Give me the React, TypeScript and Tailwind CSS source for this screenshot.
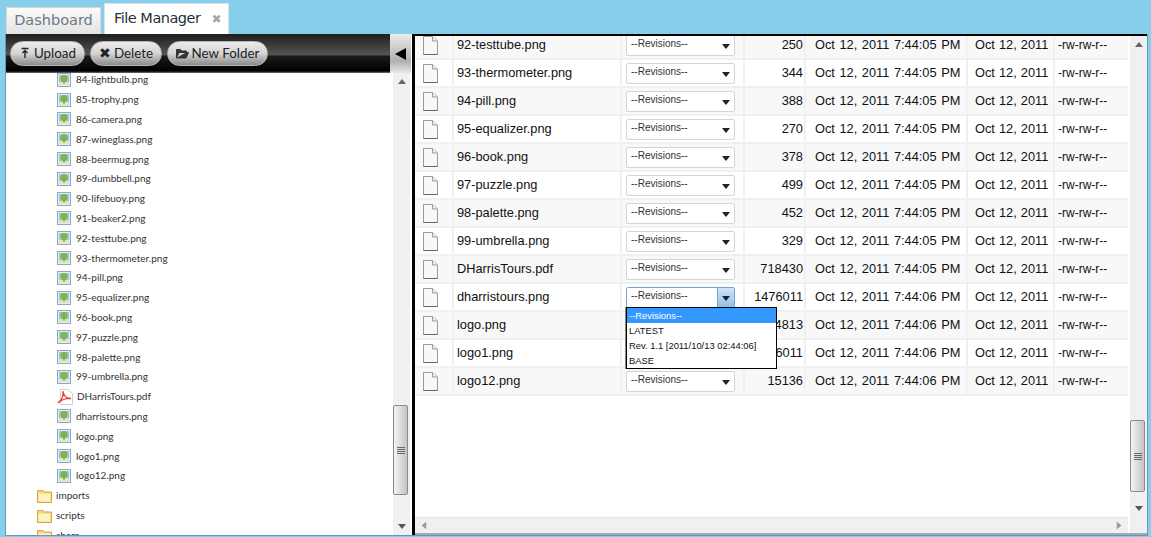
import React from "react";

const tree = ["84-lightbulb.png","85-trophy.png","86-camera.png","87-wineglass.png","88-beermug.png","89-dumbbell.png","90-lifebuoy.png","91-beaker2.png","92-testtube.png","93-thermometer.png","94-pill.png","95-equalizer.png","96-book.png","97-puzzle.png","98-palette.png","99-umbrella.png","DHarrisTours.pdf","dharristours.png","logo.png","logo1.png","logo12.png"];
const rows: [string,string,string][] = [
["92-testtube.png","250","7:44:05"],["93-thermometer.png","344","7:44:05"],["94-pill.png","388","7:44:05"],["95-equalizer.png","270","7:44:05"],["96-book.png","378","7:44:05"],["97-puzzle.png","499","7:44:05"],["98-palette.png","452","7:44:05"],["99-umbrella.png","329","7:44:05"],["DHarrisTours.pdf","718430","7:44:05"],["dharristours.png","1476011","7:44:06"],["logo.png","4813","7:44:06"],["logo1.png","6011","7:44:06"],["logo12.png","15136","7:44:06"]];

function ImgIcon(){return <svg width="14" height="14" viewBox="0 0 14 14" className="shrink-0"><rect x=".5" y=".5" width="13" height="13" fill="#e4ebf5" stroke="#8da6cc"/><rect x="2" y="2" width="10" height="10" fill="#9cc8d6"/><rect x="2" y="9" width="10" height="3" fill="#d6ecb8"/><circle cx="7" cy="5.500" r="3.500" fill="#7db548"/><rect x="6.200" y="8" width="1.600" height="2.500" fill="#b08a50"/></svg>}
function PdfIcon(){return <svg width="16" height="16" viewBox="0 0 16 16" className="shrink-0"><path d="M3.500.5H11L15.500 4.500V15.500H3.500Z" fill="#fff" stroke="#cfcfcf"/><path d="M.8 14C4.500 11.500 6.500 7 6 2.200C6.500 6.500 9.500 10 14 9.500C9 9 4.500 11 .8 14Z" fill="none" stroke="#d9443f" strokeWidth="1.300"/></svg>}
function FolderIcon(){return <svg width="15" height="14" viewBox="0 0 15 14" className="shrink-0"><path d="M.5 1.500H6L7 3H14.500V13.500H.5Z" fill="#f7d774" stroke="#d9a441"/><rect x="1.500" y="4.500" width="12" height="8" fill="#fdf3c4"/></svg>}
function DocIcon(){return <svg width="15" height="19" viewBox="0 0 15 19"><path d="M.5.5H9.500L14.500 5V18.500H.5Z" fill="#f8f8f8" stroke="#9a9a9a"/><path d="M9.500 .5V5H14.500" fill="#ececec" stroke="#9a9a9a"/><path d="M.5 18.500H14.500" stroke="#666"/></svg>}

function Caret({cls="#222"}:{cls?:string}){return <svg width="8" height="5" viewBox="0 0 8 5"><path d="M0 0H8L4 5Z" fill={cls}/></svg>}
function Grip(){return <div className="flex flex-col gap-[1px]"><div className="w-[8px] h-[1px] bg-[#666]"/><div className="w-[8px] h-[1px] bg-[#666]"/><div className="w-[8px] h-[1px] bg-[#666]"/><div className="w-[8px] h-[1px] bg-[#666]"/></div>}

function VScroll({pad,thumbH}:{pad:string;thumbH:string}){return (
<div className="w-[17px] shrink-0 bg-[#f0f0f0] flex flex-col">
  <div className="h-[17px] flex items-center justify-center shrink-0"><div className="rotate-180 flex"><Caret cls="#666"/></div></div>
  <div className={`flex-1 min-h-0 ${pad} flex flex-col justify-end`}>
    <div className={`${thumbH} w-[15px] border border-[#8a8a8a] rounded-[2px] bg-gradient-to-r from-[#f4f4f4] to-[#c4c4c4] flex items-center justify-center`}><Grip/></div>
  </div>
  <div className="h-[17px] flex items-center justify-center shrink-0"><Caret cls="#555"/></div>
</div>)}

function Btn({icon,label,w}:{icon:React.ReactNode;label:string;w:string}){return (
<div className={`${w} h-[25px] rounded-[13px] border border-[#b4b4b4] bg-gradient-to-b from-[#ececec] via-[#d4d4d4] to-[#8c8c8c] flex items-center justify-center gap-[3px] text-[13.400px] text-[#222] [font-family:Lato,sans-serif] whitespace-nowrap`}>{icon}<span>{label}</span></div>)}

function Select({active}:{active?:boolean}){return (
<div className={`w-[109px] h-[21px] bg-white border rounded-[2px] flex items-stretch ${active?"border-[#7da2ce]":"border-[#d2d6dc]"}`}>
  <div className="flex-1 pl-[4px] text-[10px] leading-[15px] text-[#333]">--Revisions--</div>
  <div className={`w-[17px] flex items-center justify-center pt-[2px] ${active?"bg-gradient-to-b from-[#cfe6f8] to-[#8fc0e8] border-l border-[#7da2ce]":""}`}><Caret/></div>
</div>)}

export default function App(){return (
<div className="w-[1151px] h-[537px] bg-[#87ceeb] overflow-hidden flex flex-col pl-[5px] pr-[3px] pb-[1px] [font-family:'Liberation_Sans',sans-serif]">
  <div className="h-[34px] shrink-0 flex items-end gap-[3px] pl-[1px]">
    <div className="h-[27px] w-[95px] border border-[#d8d8d8] border-b-0 bg-gradient-to-b from-[#fafafa] to-[#e4e4e4] text-[#6e7a84] text-[14.500px] flex items-center justify-center [font-family:'DejaVu_Sans',sans-serif] whitespace-nowrap">Dashboard</div>
    <div className="h-[31px] w-[125px] border border-[#d4e4f0] border-b-0 bg-white text-[#24303a] text-[14.500px] flex items-center pl-[9px] gap-[11px] [font-family:'DejaVu_Sans',sans-serif] tracking-[-0.500px] whitespace-nowrap"><span>File Manager</span><span className="text-[#a0a8b0] font-bold text-[12px]">✖</span></div>
  </div>
  <div className="flex-1 min-h-0 flex bg-white border-l border-r border-b border-[#5c9bbd]">
    <div className="w-[406px] shrink-0 flex flex-col min-h-0">
      <div className="h-[39px] shrink-0 flex pr-[1px]">
        <div className="w-[384px] bg-[linear-gradient(to_bottom,#1e1e1e_0%,#555555_54%,#1c1c1c_56%,#000000_95%,#777777_100%)] flex items-center pl-[4px] pb-[1px] gap-[5px]">
          <Btn w="w-[75px]" label="Upload" icon={<svg width="12" height="12" viewBox="0 0 12 12"><path d="M2.500 1.500H9.500M6 11V4M3.500 6L6 3.500L8.500 6" stroke="#222" strokeWidth="1.400" fill="none"/></svg>}/>
          <Btn w="w-[72px]" label="Delete" icon={<span className="text-[14px] leading-none">✖</span>}/>
          <Btn w="w-[101px]" label="New Folder" icon={<svg width="13" height="11" viewBox="0 0 13 11"><path d="M.5 10V1.500H4.500L5.500 3H10.500V4.500H3L.5 10H10L12.500 4.500H10" fill="#333" stroke="#333"/></svg>}/>
        </div>
        <div className="w-[21px] bg-gradient-to-b from-[#ececec] via-[#b0b0b0] via-70% to-[#e8e8e8] flex items-center justify-center"><svg width="11" height="12" viewBox="0 0 11 12"><path d="M0 6L11 0V12Z" fill="#000"/></svg></div>
      </div>
      <div className="flex-1 min-h-0 flex pr-[2px]">
        <div className="flex-1 overflow-hidden [font-family:Lato,sans-serif] text-[10px] text-[#333]">
          <div className="-mt-[3px] pl-[51px] flex flex-col">
            {tree.map((n)=>(<div key={n} className="h-[19.800px] flex items-center gap-[5px]">{n.endsWith("pdf")?<PdfIcon/>:<ImgIcon/>}<span className={n.endsWith("pdf")?"-ml-[1px]":""}>{n}</span></div>))}
          </div>
          <div className="pl-[31px] flex flex-col">
            {["imports","scripts","share"].map((n)=>(<div key={n} className="h-[20px] flex items-center gap-[4px]"><FolderIcon/><span>{n}</span></div>))}
          </div>
        </div>
        <VScroll pad="pb-[23px]" thumbH="h-[90px]"/>
      </div>
    </div>
    <div className="w-[3px] bg-black shrink-0"/>
    <div className="flex-1 min-w-0 flex flex-col border-t-[2px] border-t-black border-b-[2px] border-b-[#a8a8a8]">
      <div className="flex-1 min-h-0 flex">
        <div className="flex-1 min-w-0 overflow-hidden relative text-[12.800px] text-[#111]">
          <div className="-mt-[4px] flex flex-col">
            {rows.map(([name,size,t],i)=>(
              <div key={name} className={`h-[28px] w-[713px] shrink-0 flex border-b-[2px] border-[#f0f0f0] whitespace-nowrap ${i%2==0?"bg-[#f8f8f8]":"bg-white"}`}>
                <div className="w-[37px] flex items-center pl-[8px]"><DocIcon/></div>
                <div className="w-[168px] border-l-[2px] border-[#f0f0f0] flex items-center pl-[3px]">{name}</div>
                <div className="w-[123px] border-l-[2px] border-[#f0f0f0] flex items-center pl-[4px]"><Select active={i==9}/></div>
                <div className="w-[61px] border-l-[2px] border-[#f0f0f0] flex items-center justify-end pr-[1px]">{size}</div>
                <div className="w-[162px] border-l-[2px] border-[#f0f0f0] flex items-center pl-[9px] [word-spacing:1px]">Oct 12, 2011 {t} PM</div>
                <div className="w-[87px] border-l-[2px] border-[#f0f0f0] flex items-center pl-[7px] [word-spacing:0.500px]">Oct 12, 2011</div>
                <div className="w-[75px] border-l-[2px] border-[#f0f0f0] flex items-center pl-[3px] text-[12px]">-rw-rw-r--</div>
              </div>))}
          </div>
          <div className="absolute left-[211px] top-[271px] w-[151px] bg-white border border-black shadow-[-1px_0_0_#888] text-[9.400px] text-[#111] leading-[15px]">
            <div className="bg-[#3399ff] text-white pl-[2px]">--Revisions--</div>
            <div className="pl-[2px]">LATEST</div>
            <div className="pl-[2px]">Rev. 1.1 [2011/10/13 02:44:06]</div>
            <div className="pl-[2px]">BASE</div>
          </div>
        </div>
        <div className="w-[2px] shrink-0"/>
        <VScroll pad="pb-[8px]" thumbH="h-[72px]"/>
      </div>
      <div className="h-[16px] shrink-0 flex">
        <div className="w-[713px] bg-[#f0f0f0] border-t border-[#e4e4e4] flex items-center justify-between pl-[5px] pr-[5px]"><div className="rotate-90 flex"><Caret cls="#999"/></div><div className="-rotate-90 flex"><Caret cls="#999"/></div></div>
        <div className="flex-1 bg-[#f0f0f0] ml-[2px]"/>
      </div>
    </div>
  </div>
</div>)}
